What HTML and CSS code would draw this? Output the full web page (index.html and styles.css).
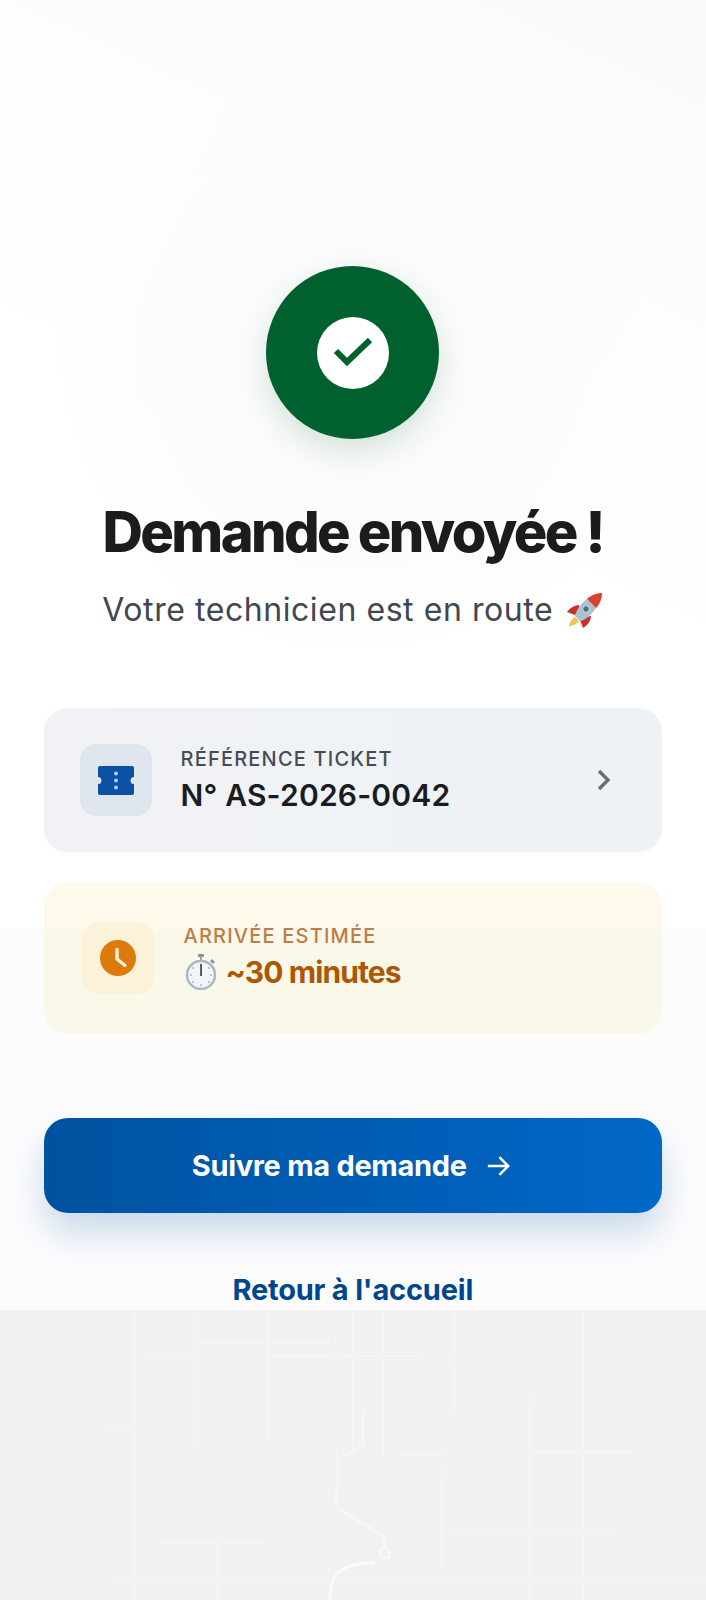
FILE: index.html
```html
<!DOCTYPE html>
<html lang="fr">
<head>
    <meta charset="UTF-8">
    <meta name="viewport" content="width=device-width, initial-scale=1.0">
    <title>Demande envoyée</title>
    <link rel="stylesheet" href="styles.css">
</head>
<body>

<main class="confirm">
    <div class="status-badge">
        <div class="status-disc">
            <svg class="status-check" viewBox="0 0 40 32"><path d="M3 14l11 11L37 3" fill="none" stroke="#01612e" stroke-width="6"/></svg>
        </div>
    </div>

    <h1 class="title">Demande envoyée !</h1>
    <p class="subtitle">
        Votre technicien est en route
        <svg class="rocket" viewBox="0 0 36 36">
            <path d="M8 25C4 27 3 31 2 34c3 0 8-2 10-5z" fill="#f5c25a"/>
            <path d="M12 13C7 13 2 17 0 20l8 3 4-5z" fill="#c9302c"/>
            <path d="M24 24c0 4-3 9-8 12l-3-8 6-3z" fill="#c9302c"/>
            <path d="M20 7C13 12 9 19 8 24l5 5c6-1 12-7 16-13z" fill="#a8c3cd"/>
            <path d="M35 1c-5 0-11 2-15 6l9 9c4-4 6-10 6-15z" fill="#dc4030"/>
            <circle cx="19" cy="17" r="3.4" fill="#4f7183" stroke="#dbe7ec"/>
        </svg>
    </p>

    <section class="card card-ticket">
        <div class="card-icon">
            <svg class="icon-ticket" viewBox="0 0 36 29">
                <path d="M2 0h32a2 2 0 0 1 2 2v9a3.5 3.5 0 0 0 0 7v9a2 2 0 0 1-2 2H2a2 2 0 0 1-2-2v-9a3.5 3.5 0 0 0 0-7V2a2 2 0 0 1 2-2z" fill="#0a50a4"/>
                <circle cx="18" cy="7.5" r="2" fill="#a3d2f7"/>
                <circle cx="18" cy="14.5" r="2" fill="#a3d2f7"/>
                <circle cx="18" cy="21.5" r="2" fill="#a3d2f7"/>
            </svg>
        </div>
        <div class="card-text">
            <div class="card-label">RÉFÉRENCE TICKET</div>
            <div class="card-value">N° AS-2026-0042</div>
        </div>
        <svg class="chevron" viewBox="0 0 14 22"><path d="M2 2l9 9-9 9" fill="none" stroke="#6a6d72" stroke-width="3.4"/></svg>
    </section>

    <section class="card card-eta">
        <div class="card-icon">
            <svg class="icon-clock" viewBox="0 0 36 36">
                <circle cx="18" cy="18" r="18" fill="#dc7a0c"/>
                <path d="M17 9.5V19l8 6.5" fill="none" stroke="#fdf3dc" stroke-width="3.4" stroke-linecap="round" stroke-linejoin="round"/>
            </svg>
        </div>
        <div class="card-text">
            <div class="card-label">ARRIVÉE ESTIMÉE</div>
            <div class="card-value">
                <svg class="stopwatch" viewBox="0 0 34 36">
                    <rect x="14" y="0" width="6" height="3" rx="1" fill="#7d8a93"/>
                    <rect x="16" y="2" width="2" height="5" fill="#9aa6ae"/>
                    <path d="M28 5l3 3-2 2-3-3z" fill="#8b979f"/>
                    <circle cx="17" cy="21" r="14" fill="#f2f5f7" stroke="#a9b7c1" stroke-width="2.4"/>
                    <g fill="#9fb0bc">
                        <circle cx="25" cy="14" r="0.9"/>
                        <circle cx="27" cy="21" r="0.9"/>
                        <circle cx="25" cy="28" r="0.9"/>
                        <circle cx="17" cy="31" r="0.9"/>
                        <circle cx="9" cy="28" r="0.9"/>
                        <circle cx="7" cy="21" r="0.9"/>
                        <circle cx="9" cy="14" r="0.9"/>
                    </g>
                    <rect x="16.2" y="10" width="1.7" height="12" fill="#3c4247"/>
                </svg>
                <span>~30 minutes</span>
            </div>
        </div>
    </section>

    <a class="btn-primary" href="#">
        Suivre ma demande
        <svg class="arrow" viewBox="0 0 26 24"><path d="M1 12h23M14 2l10 10-10 10" fill="none" stroke="#fff" stroke-width="2.8"/></svg>
    </a>
    <a class="link-home" href="#">Retour à l'accueil</a>
</main>

<!-- bande du bas avec le plan en filigrane -->
<div class="map-band">
    <svg class="map-lines" viewBox="0 0 706 290">
        <g stroke="#f3f4f4" stroke-width="2" fill="none">
            <path d="M134 0v290M197 0v140M268 0v130M336 0v150M353 0v150M383 0v150M454 0v105M530 80v210M583 0v290M443 150v60"/>
            <path d="M200 33h130M145 47h47M270 46h150M360 50h295M100 120h30M400 145h45M535 142h100M530 90h60"/>
            <path d="M160 233h100M225 233h40M450 220h170M110 272h596"/>
            <path d="M168 200v20M168 240v50M218 225v65M442 170v90"/>
        </g>
        <g fill="none" stroke-width="3">
            <path d="M363 100v35l-25 14-2 46" stroke="#f4f5f5"/>
            <path d="M340 200l45 27v10" stroke="#f6f7f7"/>
            <path d="M330 290c0-25 8-37 45-37" stroke="#f9fafa"/>
            <circle cx="385" cy="243" r="5" stroke="#f9fafa" stroke-width="2"/>
        </g>
    </svg>
</div>

</body>
</html>
```

FILE: styles.css
```css
* {
    box-sizing: border-box;
}
body {
    margin: 0;
    font-family: Inter, "Liberation Sans", sans-serif;
    background-color: #f0f1f1;
}

/* Partie haute */
.confirm {
    height: 1310px;
    padding: 266px 44px 0 43.5px;
    display: flex;
    flex-direction: column;
    align-items: center;
    background:
        radial-gradient(circle 300px at 353px 370px, #f7f8f8 0%, rgba(247, 248, 248, 0) 100%),
        linear-gradient(205deg, #f8f9fa 0, #fdfefe 400px, #ffffff 700px);
    background-size: 100% 100%, 100% 928px;
    background-repeat: no-repeat;
    background-color: #fcfcfd;
}

/* Pastille verte */
.status-badge {
    width: 173px;
    height: 173px;
    flex: none;
    border-radius: 50%;
    background-color: #01612e;
    display: flex;
    align-items: center;
    justify-content: center;
    box-shadow: 0 12px 28px rgba(3, 98, 47, 0.14);
}
.status-disc {
    width: 72px;
    height: 72px;
    border-radius: 50%;
    background-color: #fff;
    display: flex;
    align-items: center;
    justify-content: center;
}
.status-check {
    width: 40px;
    height: 32px;
}

.title {
    margin: 59px 0 0;
    font-size: 56px;
    line-height: 68px;
    font-weight: 800;
    letter-spacing: -2.6px;
    color: #1a1c1e;
    white-space: nowrap;
}
.subtitle {
    margin: 22px 0 0;
    height: 44px;
    font-size: 32px;
    line-height: 44px;
    letter-spacing: 0.56px;
    color: #41474f;
    display: flex;
    align-items: center;
    gap: 14px;
    white-space: nowrap;
}
.rocket {
    width: 36px;
    height: 36px;
    flex: none;
}

/* Cartes */
.card {
    width: 100%;
    flex: none;
    display: flex;
    align-items: center;
    border-radius: 24px;
    padding: 0 36px;
}
.card-ticket {
    height: 144px;
    margin-top: 76px;
    background: linear-gradient(90deg, #f0f2f6, #eef2f5);
    box-shadow: 0 2px 6px rgba(0, 0, 0, 0.02);
}
.card-eta {
    height: 152px;
    margin-top: 30px;
    padding-left: 38px;
    background: linear-gradient(#fff9eb 0, #fff9eb 31%, #faf8e8 31%, #faf8e8 100%);
}
.card-icon {
    width: 72px;
    height: 72px;
    flex: none;
    border-radius: 16px;
    display: flex;
    align-items: center;
    justify-content: center;
    background-color: #dfe6ee;
}
.card-eta .card-icon {
    background-color: #fcf1d9;
}
.icon-ticket {
    width: 36px;
    height: 29px;
}
.icon-clock {
    width: 36px;
    height: 36px;
}
.card-text {
    flex: 1;
    margin-left: 29px;
}
.card-eta .card-text {
    margin-left: 30px;
    margin-bottom: 3px;
}
.card-label {
    font-size: 20px;
    line-height: 26px;
    font-weight: 500;
    letter-spacing: 1.2px;
    color: #474c54;
}
.card-eta .card-label {
    color: #bb7d4a;
}
.card-value {
    margin-top: 4px;
    font-size: 30px;
    line-height: 38px;
    font-weight: 600;
    letter-spacing: 0.2px;
    color: #1a1c1e;
    display: flex;
    align-items: center;
}
.card-eta .card-value {
    color: #ae5600;
    font-weight: 700;
    letter-spacing: -0.9px;
}
.stopwatch {
    width: 34px;
    height: 36px;
    margin-right: 8px;
}
.chevron {
    width: 14px;
    height: 22px;
    margin-right: 15px;
}

/* Boutons */
.btn-primary {
    width: 100%;
    height: 95px;
    flex: none;
    margin-top: 84px;
    padding-right: 4px;
    border-radius: 24px;
    display: flex;
    align-items: center;
    justify-content: center;
    gap: 20px;
    font-size: 29px;
    font-weight: 700;
    letter-spacing: -0.3px;
    color: #fff;
    text-decoration: none;
    background: linear-gradient(90deg, #00529f, #0067c8);
    box-shadow: 0 20px 36px rgba(0, 82, 159, 0.2);
}
.arrow {
    width: 23px;
    height: 22px;
}
.link-home {
    margin-top: 59px;
    font-size: 29px;
    line-height: 36px;
    font-weight: 700;
    letter-spacing: -0.2px;
    color: #00468e;
    text-decoration: none;
}

/* Bande du bas */
.map-band {
    height: 290px;
}
.map-lines {
    display: block;
    width: 100%;
    height: 100%;
}
```
